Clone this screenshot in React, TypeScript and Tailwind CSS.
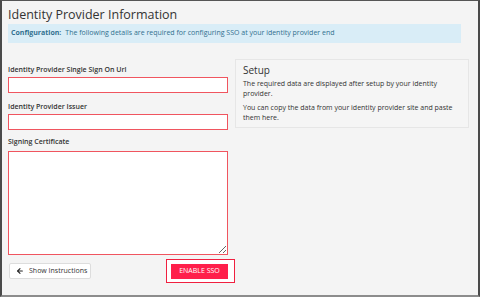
import { ArrowLeft } from 'lucide-react';

const font = { fontFamily: '"Open Sans", "Liberation Sans", sans-serif' };

const App = () => {
  return (
    <div
      style={font}
      className="w-[480px] h-[297px] bg-[#f4f4f4] border-t border-t-[#555] border-l-2 border-l-[#4a4a4a] border-r-2 border-r-[#4a4a4a] border-b-2 border-b-[#8c8c8c] overflow-hidden"
    >
      <div className="pl-[6px]">
        <h2 className="text-[12.5px] leading-[18px] text-[#333] mt-[5px]">Identity Provider Information</h2>
        <div className="w-[453px] bg-[#d9edf7] text-[#31708f] text-[7px] h-[19px] flex items-center px-[3px]">
          <strong className="font-bold mr-[4px]">Configuration:</strong>
          The following details are required for configuring SSO at your identity provider end
        </div>

        <div className="flex items-start mt-[16px] gap-[7px]">
          <div className="w-[220px] shrink-0 flex flex-col pt-[6px]">
            <label className="text-[7px] font-semibold text-[#333] leading-[10px] mb-[2px]">
              Identity Provider Single Sign On Url
            </label>
            <input className="h-[16px] w-full border border-[#f0555f] bg-white outline-none" />

            <label className="text-[7px] font-semibold text-[#333] leading-[10px] mt-[9px] mb-[2px]">
              Identity Provider Issuer
            </label>
            <input className="h-[16px] w-full border border-[#f0555f] bg-white outline-none" />

            <label className="text-[7px] font-semibold text-[#333] leading-[10px] mt-[7px] mb-[4px]">
              Signing Certificate
            </label>
            <textarea className="block h-[104px] w-full border border-[#f0555f] bg-white outline-none" />

            <div className="flex items-center justify-between mt-[4px]">
              <button className="flex items-center gap-[5px] h-[16px] w-[82px] ml-[1px] bg-white border border-[#ddd] rounded-[2px] text-[7px] text-[#333] pl-[6px] whitespace-nowrap">
                <ArrowLeft size={8} strokeWidth={3.2} color="#222" />
                Show Instructions
              </button>
              <div className="border border-[#f02040] bg-white pl-[4px] pr-[6px] pt-[4px] pb-[3px] mr-[-7px]">
                <button className="block h-[15px] w-[57px] bg-[#ff1f4b] text-white text-[7px] uppercase">
                  Enable SSO
                </button>
              </div>
            </div>
          </div>

          <div className="w-[234px] shrink-0 h-[69px] border border-[#e6e6e6] bg-[#f5f5f5] px-[7px] pt-[3px]">
            <h3 className="text-[10px] text-[#333] leading-[14px]">Setup</h3>
            <p className="text-[7px] text-[#333] leading-[10px] mt-[2px]">
              The required data are displayed after setup by your identity provider.
            </p>
            <p className="text-[7px] text-[#333] leading-[10px] mt-[4px]">
              You can copy the data from your identity provider site and paste them here.
            </p>
          </div>
        </div>
      </div>
    </div>
  );
};

export default App;
